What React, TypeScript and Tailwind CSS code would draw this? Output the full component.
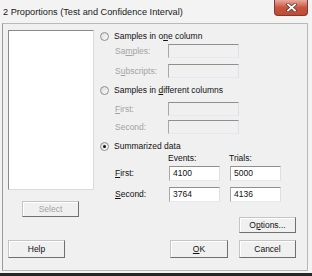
const TextBox = ({
  value,
  disabled,
  w,
  h,
}: {
  value?: string;
  disabled?: boolean;
  w: string;
  h: string;
}) => (
  <div
    className={`${w} ${h} border border-[#abadb3] border-t-[#8e8f8f] border-l-[#a8a8a8] border-r-[#dbdfe6] border-b-[#e3e9ef] flex items-center pl-[3px] text-[8.5px] leading-none ${
      disabled ? 'bg-[#f0f0f0]' : 'bg-white'
    }`}>
    {value}
  </div>
);

const Radio = ({ checked }: { checked?: boolean }) => (
  <span className="w-[9px] h-[9px] shrink-0 rounded-full border border-[#8e8f8f] bg-linear-to-br from-[#dcdcdc] to-[#fbfbfb] flex items-center justify-center">
    {checked && <span className="w-[3px] h-[3px] rounded-full bg-[#111]" />}
  </span>
);

const Button = ({
  children,
  disabled,
  w = 'w-[57px]',
  h = 'h-[18px]',
}: {
  children: React.ReactNode;
  disabled?: boolean;
  w?: string;
  h?: string;
}) => (
  <div
    className={`${w} ${h} border border-[#c4c4c4] border-r-[#6f6f6f] border-b-[#6f6f6f] bg-[#f0f0f0] shadow-[inset_1px_1px_0_#ffffff] flex items-center justify-center text-[8.5px] leading-none ${
      disabled ? 'text-[#a3a3a3]' : 'text-[#111]'
    }`}>
    {children}
  </div>
);

const App = () => {
  return (
    <div className="w-[312px] h-[276px] bg-[#f3f3f3] flex flex-col overflow-hidden font-['Liberation_Sans',Arial,sans-serif] text-[#111]">
      {/* title bar */}
      <div className="h-[23px] flex items-start shrink-0">
        <span className="pl-[3px] pt-[8px] text-[9.2px] leading-none text-[#1a1a1a]">
          2 Proportions (Test and Confidence Interval)
        </span>
        <div className="ml-auto mr-[4px] w-[34px] h-[16px] rounded-b-[4px] border border-t-0 border-[#7d3a32] bg-linear-to-b from-[#e6a99e] via-[#c9553f] to-[#c04a34] flex items-center justify-center">
          <svg width="11" height="9" viewBox="0 0 11 9">
            <path
              d="M2 1.5 L9 7.5 M9 1.5 L2 7.5"
              stroke="#5a3630"
              strokeWidth="3.2"
              strokeLinecap="square"
            />
            <path
              d="M2 1.5 L9 7.5 M9 1.5 L2 7.5"
              stroke="#ffffff"
              strokeWidth="1.8"
              strokeLinecap="square"
            />
          </svg>
        </div>
      </div>

      {/* client area */}
      <div className="ml-[2px] w-[306px] h-[248px] border border-[#b9b9b9] border-l-[#9a9a9a] bg-[#f0f0f0] flex flex-col shrink-0">
        <div className="flex">
          {/* left column */}
          <div className="pl-[5px] pt-[6px] flex flex-col">
            <div className="w-[86px] h-[160px] bg-white border border-[#dadada] border-t-[#8a8a8a] border-l-[#8a8a8a]" />
            <div className="mt-[11px] ml-[14px]">
              <Button disabled h="h-[16px]">
                Select
              </Button>
            </div>
          </div>

          {/* right column */}
          <div className="ml-[6px] pt-[5px] flex flex-col text-[8.5px] leading-none">
            <div className="h-[14px] flex items-center gap-[5px]">
              <Radio />
              <span>
                Samples in o<u>n</u>e column
              </span>
            </div>
            <div className="mt-[1px] flex items-center text-[#a3a3a3]">
              <span className="w-[68px] pl-[15px]">
                Sa<u>m</u>ples:
              </span>
              <TextBox disabled w="w-[71px]" h="h-[14px]" />
            </div>
            <div className="mt-[6px] flex items-center text-[#a3a3a3]">
              <span className="w-[68px] pl-[15px]">
                S<u>u</u>bscripts:
              </span>
              <TextBox disabled w="w-[71px]" h="h-[14px]" />
            </div>
            <div className="mt-[5px] h-[14px] flex items-center gap-[5px]">
              <Radio />
              <span>
                Samples in <u>d</u>ifferent columns
              </span>
            </div>
            <div className="mt-[5px] flex items-center text-[#a3a3a3]">
              <span className="w-[68px] pl-[15px]">
                <u>F</u>irst:
              </span>
              <TextBox disabled w="w-[71px]" h="h-[14px]" />
            </div>
            <div className="mt-[4px] flex items-center text-[#a3a3a3]">
              <span className="w-[68px] pl-[15px]">Second:</span>
              <TextBox disabled w="w-[71px]" h="h-[14px]" />
            </div>
            <div className="mt-[5px] h-[14px] flex items-center gap-[5px]">
              <Radio checked />
              <span>Summarized data</span>
            </div>
            <div className="h-[10px] flex items-center">
              <span className="w-[68px]" />
              <span className="w-[61px]">Events:</span>
              <span>Trials:</span>
            </div>
            <div className="mt-[3px] flex items-center">
              <span className="w-[69px] pl-[15px]">
                <u>F</u>irst:
              </span>
              <TextBox value="4100" w="w-[51px]" h="h-[15px]" />
              <span className="w-[10px]" />
              <TextBox value="5000" w="w-[51px]" h="h-[15px]" />
            </div>
            <div className="mt-[6px] flex items-center">
              <span className="w-[69px] pl-[15px]">
                <u>S</u>econd:
              </span>
              <TextBox value="3764" w="w-[51px]" h="h-[15px]" />
              <span className="w-[10px]" />
              <TextBox value="4136" w="w-[51px]" h="h-[15px]" />
            </div>
          </div>
        </div>

        {/* bottom buttons */}
        <div className="flex justify-end pr-[11px]">
          <Button h="h-[16px]">
            O<u>p</u>tions...
          </Button>
        </div>
        <div className="mt-[7px] flex pl-[5px] pr-[11px]">
          <Button>Help</Button>
          <div className="ml-auto flex gap-[11px]">
            <Button w="w-[58px]">
              <u>O</u>K
            </Button>
            <Button>Cancel</Button>
          </div>
        </div>
      </div>

      <div className="mt-auto h-[3px] bg-[#262626]" />
    </div>
  );
};

export default App;
